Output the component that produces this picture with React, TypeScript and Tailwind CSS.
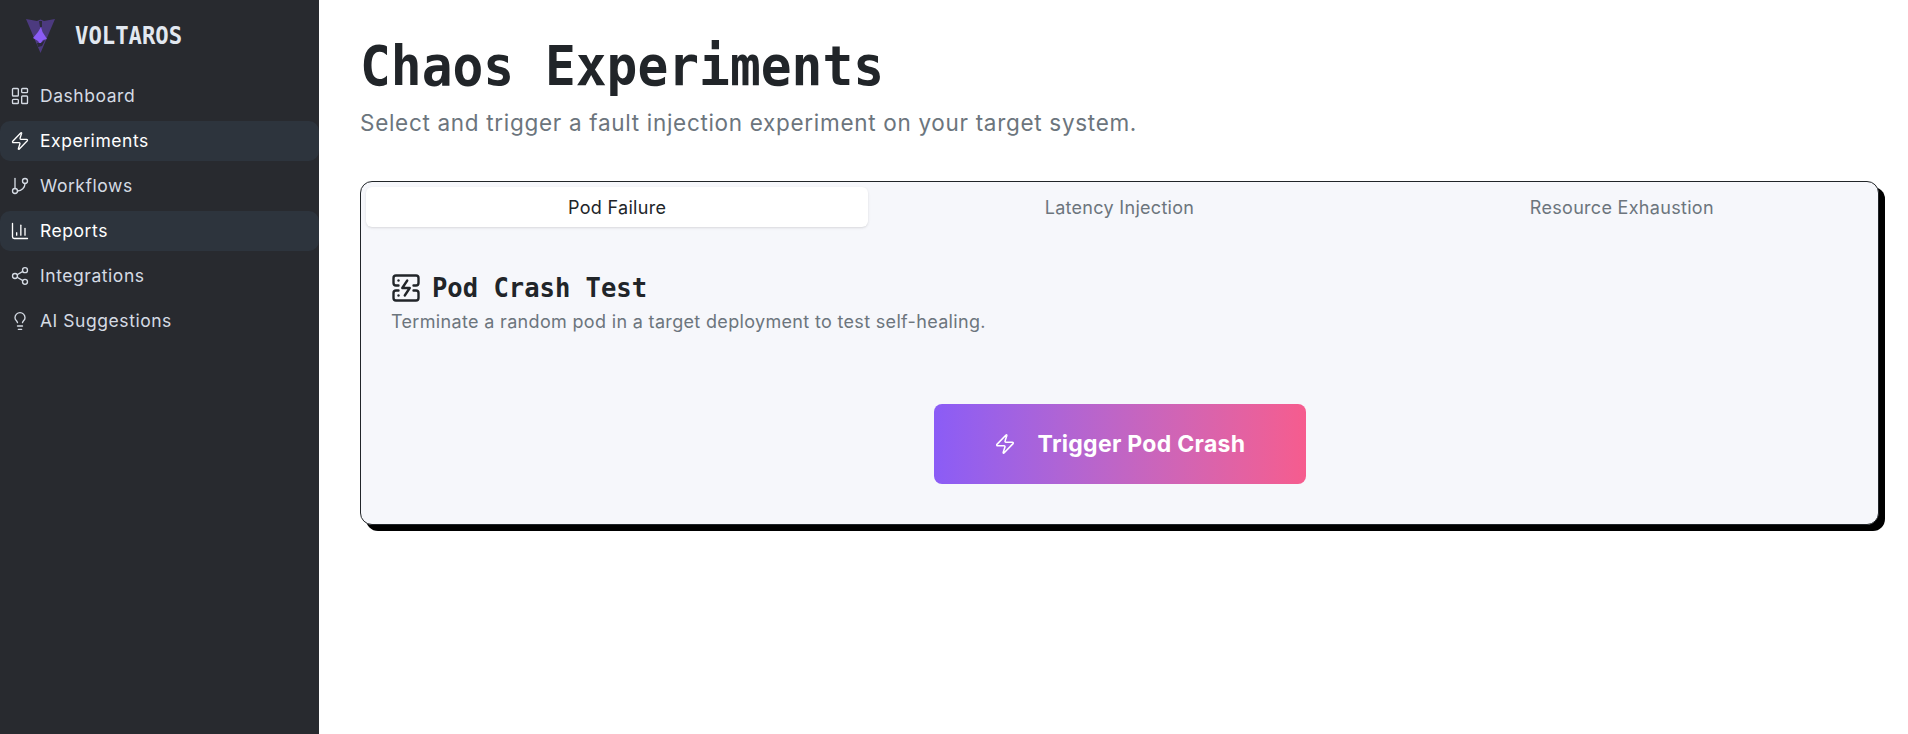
import * as React from 'react';
import { ChartColumn, GitBranch, LayoutDashboard, Lightbulb, ServerCrash, Share2, Zap } from 'lucide-react';

const navItems = [
  { label: 'Dashboard', icon: LayoutDashboard, active: false },
  { label: 'Experiments', icon: Zap, active: true },
  { label: 'Workflows', icon: GitBranch, active: false },
  { label: 'Reports', icon: ChartColumn, active: true },
  { label: 'Integrations', icon: Share2, active: false },
  { label: 'AI Suggestions', icon: Lightbulb, active: false },
];

const tabs = ['Pod Failure', 'Latency Injection', 'Resource Exhaustion'];

const App: React.FC = () => {
  return (
    <div className="flex h-screen bg-white font-['Inter',sans-serif] overflow-hidden">
      <aside className="w-[319px] shrink-0 bg-[#282a2f]">
        <div className="flex h-[72px] items-center pl-[26px] pr-4">
          <svg width="29" height="34" viewBox="0 0 29 34" className="shrink-0">
            <path d="M0 0 L11 2 L14.5 0.5 L18 2 L29 0 L14.5 34 Z" fill="#4c3a7f" />
            <path d="M13 2 L16 2 L16 8 L14 8 Z" fill="#2b2a3a" />
            <path d="M15 8 L16.5 13 L21 20 L17 21 L14 25 L12 22 L7 19 L12 13 Z" fill="#8b5cf6" />
            <path d="M11 24 L15 24 L19 21 L16 27 L12 28 Z" fill="#2b2a3a" />
          </svg>
          <span className="ml-[20px] origin-left scale-x-[0.89] whitespace-nowrap font-['DejaVu_Sans_Mono',monospace] text-[25px] font-bold text-[#e2e8f0]">
            VOLTAROS
          </span>
        </div>
        <nav className="mt-[4px] flex flex-col gap-[5px]">
          {navItems.map(({ label, icon: Icon, active }) => (
            <a
              key={label}
              href="#"
              className={`flex h-10 items-center gap-[10px] rounded-[10px] pl-[10px] text-[17.5px] tracking-[0.55px] ${
                active ? 'bg-[#2d343d] text-white' : 'text-[#d5dbe4]'
              }`}
            >
              <Icon size={20} strokeWidth={1.6} />
              <span className="pt-[1px]">{label}</span>
            </a>
          ))}
        </nav>
      </aside>

      <main className="min-w-0 flex-1 pl-[41px] pr-[29px] pt-[32px]">
        <h1 className="origin-left scale-x-[0.931] whitespace-nowrap font-['DejaVu_Sans_Mono',monospace] text-[55px] leading-[68px] font-bold text-[#212529]">
          Chaos Experiments
        </h1>
        <p className="mt-[7px] text-[22.5px] leading-8 tracking-[0.69px] text-[#6c757d]">
          Select and trigger a fault injection experiment on your target system.
        </p>

        <section className="mt-[42px] h-[344px] rounded-xl border border-[#212529] bg-[#f6f7fb] shadow-[6px_6px_0_#000]">
          <div className="grid grid-cols-3 px-[5px] pt-[5px]">
            {tabs.map((tab, i) => (
              <button
                key={tab}
                className={`h-10 rounded-md text-[18px] tracking-[0.3px] ${i === 0 ? 'bg-white text-[#212529] shadow-sm' : 'text-[#6c757d]'}`}
              >
                {tab}
              </button>
            ))}
          </div>
          <div className="px-[30px] pt-[45px]">
            <div className="flex items-center gap-[11px]">
              <ServerCrash size={30} strokeWidth={1.9} className="text-[#212529]" />
              <h2 className="origin-left scale-x-[0.945] whitespace-nowrap font-['DejaVu_Sans_Mono',monospace] text-[27px] leading-8 font-bold text-[#212529]">
                Pod Crash Test
              </h2>
            </div>
            <p className="mt-[6px] text-[18px] leading-6 tracking-[0.33px] text-[#6c757d]">
              Terminate a random pod in a target deployment to test self-healing.
            </p>
            <div className="mt-[70px] flex justify-center">
              <button className="flex h-20 w-[372px] items-center justify-center gap-[22px] rounded-lg bg-gradient-to-r from-[#8b5cf6] to-[#f65c8e] text-[23px] tracking-[0.3px] font-bold text-white">
                <Zap size={22} strokeWidth={1.7} />
                Trigger Pod Crash
              </button>
            </div>
          </div>
        </section>
      </main>
    </div>
  );
};

export default App;
